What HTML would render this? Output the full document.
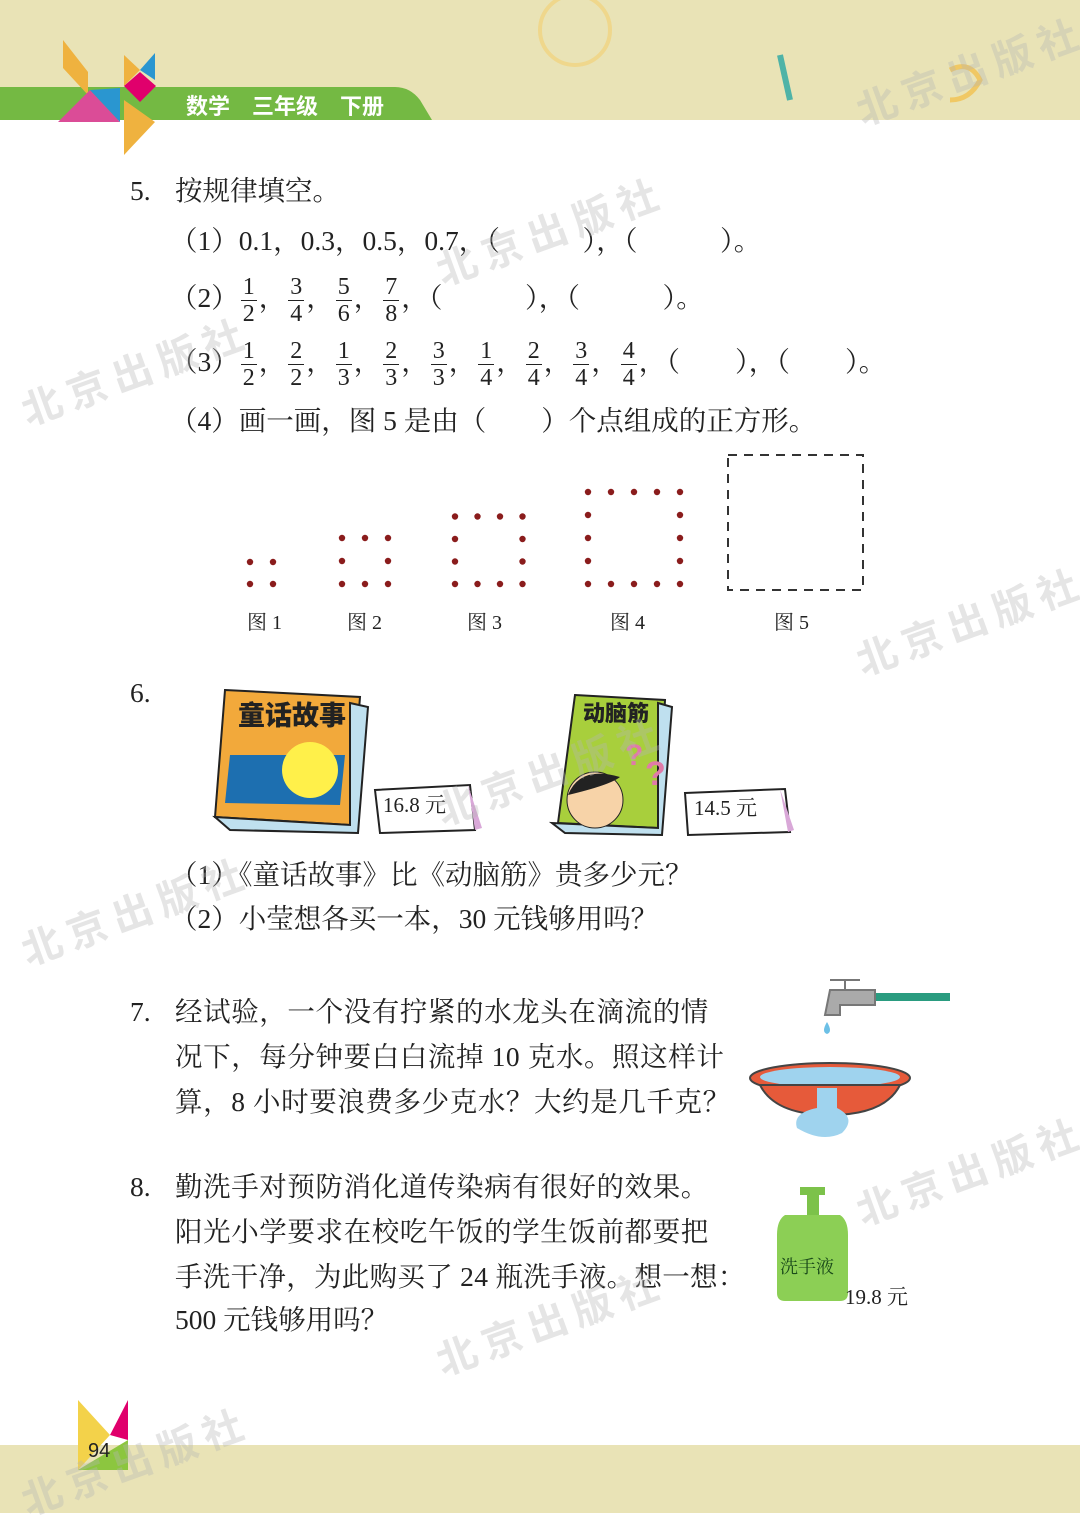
<!DOCTYPE html>
<html><head><meta charset="utf-8"><style>
body{margin:0;width:1080px;height:1513px;position:relative;background:#fff;overflow:hidden;font-family:"Liberation Serif","Noto Serif CJK SC",serif;color:#222}
.t{position:absolute;font-size:27.5px;white-space:nowrap;line-height:34px}
.f{display:inline-flex;flex-direction:column;align-items:center;vertical-align:middle;font-size:24px;line-height:26px;margin:0 2px}
.f span:first-child{border-bottom:1.5px solid #222;padding:0 2px}
.wm{position:absolute;font-family:"Noto Sans CJK SC",sans-serif;font-weight:bold;font-size:40px;color:rgba(180,180,180,.35);transform:rotate(-20deg);letter-spacing:8px;white-space:nowrap}
.cap{position:absolute;font-size:20px}
</style></head><body>
<div style="position:absolute;left:0;top:0;width:1080px;height:120px;background:#e9e3b6"></div>
<div style="position:absolute;left:0;top:1445px;width:1080px;height:68px;background:#e9e3b6"></div>
<svg style="position:absolute;left:0;top:0" width="1080" height="160">
<path d="M0 87 L395 87 Q410 87 420 100 L432 120 L0 120Z" fill="#74b943"/>
<polygon points="63,40 63,68 88,95 88,72" fill="#efb23f"/>
<polygon points="58,122 120,122 90,90" fill="#db4c97"/>
<polygon points="90,90 120,88 120,122" fill="#2a96d0"/>
<polygon points="124,55 140,70 124,86" fill="#efb23f"/>
<polygon points="140,70 155,53 155,80" fill="#2a96d0"/>
<polygon points="140,72 156,86 140,102 124,86" fill="#e0006c"/>
<polygon points="124,100 124,155 155,122" fill="#efb23f"/>
<text x="186" y="114" font-family="Noto Sans CJK SC" font-weight="bold" font-size="22" fill="#fff">数学　三年级　下册</text>
<circle cx="575" cy="30" r="35" fill="none" stroke="#f3cf70" stroke-width="4" opacity=".6"/>
<path d="M780 55 L790 100" stroke="#4fb3a7" stroke-width="6"/>
<path d="M950 70 q20 -10 30 10 q-10 20 -30 20" stroke="#f0c864" stroke-width="5" fill="none"/>
</svg>
<div class="t" style="left:130px;top:174px">5.</div><div class="t" style="left:175px;top:174px">按规律填空。</div>
<div class="t" style="left:170px;top:224px">（1）0.1，0.3，0.5，0.7，（　　　），（　　　）。</div>
<div class="t" style="left:170px;top:268px;line-height:60px">（2）<span class="f"><span>1</span><span>2</span></span>，<span class="f"><span>3</span><span>4</span></span>，<span class="f"><span>5</span><span>6</span></span>，<span class="f"><span>7</span><span>8</span></span>，（　　　），（　　　）。</div>
<div class="t" style="left:170px;top:332px;line-height:60px">（3）<span class="f"><span>1</span><span>2</span></span>，<span class="f"><span>2</span><span>2</span></span>，<span class="f"><span>1</span><span>3</span></span>，<span class="f"><span>2</span><span>3</span></span>，<span class="f"><span>3</span><span>3</span></span>，<span class="f"><span>1</span><span>4</span></span>，<span class="f"><span>2</span><span>4</span></span>，<span class="f"><span>3</span><span>4</span></span>，<span class="f"><span>4</span><span>4</span></span>，（　　），（　　）。</div>
<div class="t" style="left:170px;top:404px">（4）画一画，图 5 是由（　　）个点组成的正方形。</div>
<svg style="position:absolute;left:0;top:440px" width="1080" height="160">
<g fill="#8a1c1c">
<circle cx="250" cy="122" r="3.2"/><circle cx="273" cy="122" r="3.2"/><circle cx="250" cy="144" r="3.2"/><circle cx="273" cy="144" r="3.2"/>
</g>
<g fill="#8a1c1c" id="g"></g>
<rect x="728" y="15" width="135" height="135" fill="none" stroke="#333" stroke-width="2" stroke-dasharray="9,7"/>
</svg>
<div class="cap" style="left:247px;top:606px">图 1</div>
<div class="cap" style="left:347px;top:606px">图 2</div>
<div class="cap" style="left:467px;top:606px">图 3</div>
<div class="cap" style="left:610px;top:606px">图 4</div>
<div class="cap" style="left:774px;top:606px">图 5</div>
<div class="t" style="left:130px;top:676px">6.</div>
<svg style="position:absolute;left:200px;top:685px" width="600" height="155">
<path d="M25 5 L160 12 L150 140 L15 132Z" fill="#f2a93b" stroke="#222" stroke-width="2"/>
<path d="M150 18 L168 22 L158 148 L30 145 L15 132 L150 140Z" fill="#bfe0ef" stroke="#222" stroke-width="2"/>
<path d="M30 70 L145 70 L140 120 L25 118Z" fill="#1d6fb0"/>
<circle cx="110" cy="85" r="28" fill="#fff04a"/>
<text x="38" y="40" font-family="Noto Sans CJK SC" font-weight="900" font-size="27" fill="#222">童话故事</text>
<path d="M175 105 L270 100 L275 145 L180 148Z" fill="#fff" stroke="#222" stroke-width="2"/>
<path d="M268 100 L282 143 L275 145Z" fill="#d9a8d8"/>
<text x="183" y="127" font-size="21" font-family="Liberation Serif,Noto Serif CJK SC" fill="#222">16.8 元</text>
<path d="M375 10 L465 15 L458 143 L358 138Z" fill="#a8cf3c" stroke="#222" stroke-width="2"/>
<path d="M458 18 L472 22 L462 150 L365 148 L352 138 L458 143Z" fill="#bfe0ef" stroke="#222" stroke-width="2"/>
<circle cx="395" cy="115" r="28" fill="#f7d3a8" stroke="#222"/>
<path d="M368 110 Q380 80 420 92 Q410 100 368 110Z" fill="#222"/>
<text x="383" y="36" font-family="Noto Sans CJK SC" font-weight="900" font-size="22" fill="#222">动脑筋</text>
<text x="425" y="80" font-size="30" fill="#e07aa8" font-weight="bold" font-family="Liberation Sans">?</text>
<text x="445" y="100" font-size="34" fill="#e07aa8" font-weight="bold" font-family="Liberation Sans">?</text>
<path d="M485 108 L585 104 L590 147 L488 150Z" fill="#fff" stroke="#222" stroke-width="2"/>
<path d="M580 104 L594 145 L588 147Z" fill="#d9a8d8"/>
<text x="494" y="130" font-size="21" font-family="Liberation Serif,Noto Serif CJK SC" fill="#222">14.5 元</text>
</svg>
<div class="t" style="left:170px;top:858px">（1）《童话故事》比《动脑筋》贵多少元？</div>
<div class="t" style="left:170px;top:902px">（2）小莹想各买一本，30 元钱够用吗？</div>
<div class="t" style="left:130px;top:995px">7.</div>
<div class="t" style="left:175px;top:995px;letter-spacing:0.6px">经试验，一个没有拧紧的水龙头在滴流的情</div>
<div class="t" style="left:175px;top:1040px;letter-spacing:0.6px">况下，每分钟要白白流掉 10 克水。照这样计</div>
<div class="t" style="left:175px;top:1085px;letter-spacing:0.6px">算，8 小时要浪费多少克水？大约是几千克？</div>
<svg style="position:absolute;left:745px;top:960px" width="220" height="360">
<rect x="130" y="33" width="75" height="8" fill="#2a9c80"/>
<path d="M85 20 h30 M100 20 v10 M85 30 h45 v15 h-35 v10 h-15Z" fill="#aaa" stroke="#777" stroke-width="2"/>
<path d="M82 62 q-6 10 0 12 q6 -2 0 -12Z" fill="#6cc0e6"/>
<ellipse cx="85" cy="118" rx="80" ry="15" fill="#e65a3a" stroke="#444" stroke-width="2"/>
<ellipse cx="85" cy="117" rx="70" ry="10" fill="#9fd3ee"/>
<path d="M15 125 Q30 155 85 155 Q140 155 155 125Z" fill="#e65a3a" stroke="#444" stroke-width="2"/>
<path d="M72 128 h20 v20 q20 10 5 25 q-20 10 -45 -5 q-5 -15 20 -20Z" fill="#9fd3ee"/>
<rect x="55" y="227" width="25" height="8" fill="#7cc24a"/>
<rect x="62" y="235" width="12" height="20" fill="#7cc24a"/>
<path d="M40 255 h55 q8 5 8 20 v58 q0 8 -8 8 h-55 q-8 0 -8 -8 v-58 q0 -15 8 -20Z" fill="#8ccf55"/>
<text x="35" y="313" font-size="18" font-family="Noto Serif CJK SC" fill="#1a4a1a">洗手液</text>
</svg>
<div class="t" style="left:845px;top:1280px;font-size:21px">19.8 元</div>
<div class="t" style="left:130px;top:1170px">8.</div>
<div class="t" style="left:175px;top:1170px;letter-spacing:0.6px">勤洗手对预防消化道传染病有很好的效果。</div>
<div class="t" style="left:175px;top:1215px;letter-spacing:0.6px">阳光小学要求在校吃午饭的学生饭前都要把</div>
<div class="t" style="left:175px;top:1260px;letter-spacing:0.3px">手洗干净，为此购买了 24 瓶洗手液。想一想：</div>
<div class="t" style="left:175px;top:1303px">500 元钱够用吗？</div>
<svg style="position:absolute;left:70px;top:1395px" width="70" height="90">
<polygon points="8,5 8,75 40,40" fill="#f3d24a"/>
<polygon points="40,40 58,5 58,45" fill="#e0006c"/>
<polygon points="8,75 58,45 58,75" fill="#8cc63f"/>
<text x="18" y="62" font-size="20" font-family="Liberation Sans" fill="#222">94</text>
</svg>
<div class="wm" style="left:850px;top:40px">北京出版社</div>
<div class="wm" style="left:430px;top:200px">北京出版社</div>
<div class="wm" style="left:15px;top:340px">北京出版社</div>
<div class="wm" style="left:850px;top:590px">北京出版社</div>
<div class="wm" style="left:430px;top:740px">北京出版社</div>
<div class="wm" style="left:15px;top:880px">北京出版社</div>
<div class="wm" style="left:850px;top:1140px">北京出版社</div>
<div class="wm" style="left:430px;top:1290px">北京出版社</div>
<div class="wm" style="left:15px;top:1430px">北京出版社</div>
<script>
var g=document.getElementById('g'),s='';
function sq(x0,y1,n,step){for(var i=0;i<n;i++)for(var j=0;j<n;j++){if(i==0||j==0||i==n-1||j==n-1)s+='<circle cx="'+(x0+i*step)+'" cy="'+(y1-j*step)+'" r="3.2"/>';}}
sq(342,144,3,23);sq(455,144,4,22.5);sq(588,144,5,23);
g.innerHTML=s;
</script>
</body></html>
